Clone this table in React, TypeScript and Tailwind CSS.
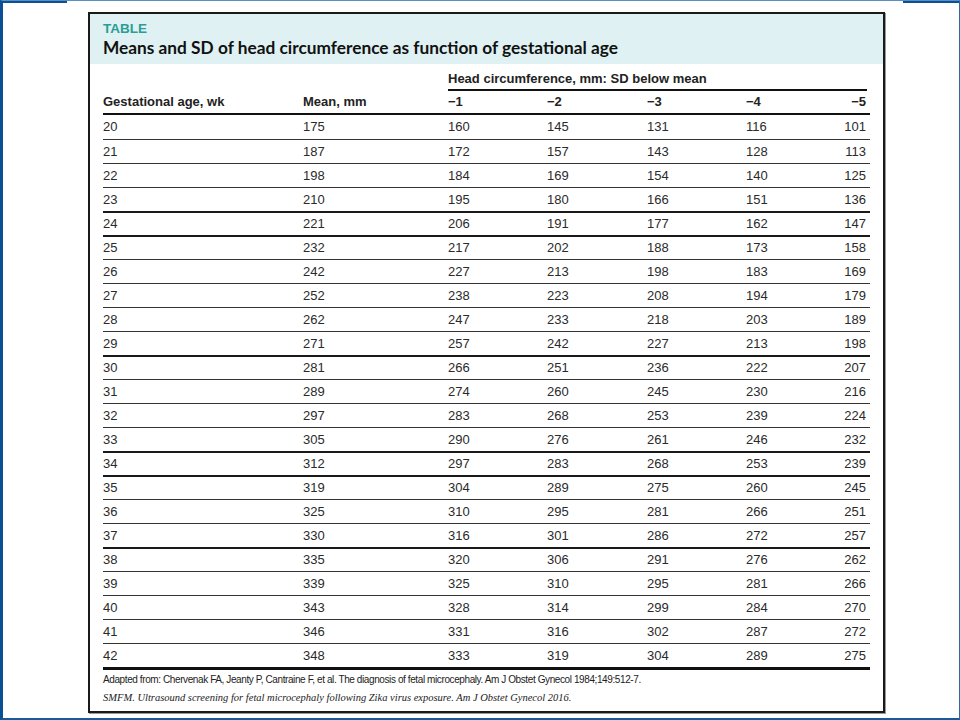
import React from "react";

const rows: number[][] = [
  [20, 175, 160, 145, 131, 116, 101],
  [21, 187, 172, 157, 143, 128, 113],
  [22, 198, 184, 169, 154, 140, 125],
  [23, 210, 195, 180, 166, 151, 136],
  [24, 221, 206, 191, 177, 162, 147],
  [25, 232, 217, 202, 188, 173, 158],
  [26, 242, 227, 213, 198, 183, 169],
  [27, 252, 238, 223, 208, 194, 179],
  [28, 262, 247, 233, 218, 203, 189],
  [29, 271, 257, 242, 227, 213, 198],
  [30, 281, 266, 251, 236, 222, 207],
  [31, 289, 274, 260, 245, 230, 216],
  [32, 297, 283, 268, 253, 239, 224],
  [33, 305, 290, 276, 261, 246, 232],
  [34, 312, 297, 283, 268, 253, 239],
  [35, 319, 304, 289, 275, 260, 245],
  [36, 325, 310, 295, 281, 266, 251],
  [37, 330, 316, 301, 286, 272, 257],
  [38, 335, 320, 306, 291, 276, 262],
  [39, 339, 325, 310, 295, 281, 266],
  [40, 343, 328, 314, 299, 284, 270],
  [41, 346, 331, 316, 302, 287, 272],
  [42, 348, 333, 319, 304, 289, 275],
];

const thick = new Set([24, 25, 30, 34, 35, 38]);

const grid = "grid grid-cols-[200px_145px_99px_100px_99px_64px_60px]";

export default function App() {
  return (
    <div className="relative w-[960px] h-[720px] bg-white border-l-[3px] border-l-[#0b4f95] border-t border-t-[#5a8fc4] border-r border-r-[#2a6aa8] border-b-2 border-b-[#1a5a9a] overflow-hidden">
      <div className="absolute left-0 top-0 w-[64px] h-[2px] bg-[#0b4f95]" />
      <div className="absolute right-0 top-0 w-[56px] h-[2px] bg-[#0b4f95]" />
      <div className="pl-[85px] pt-[11px]">
        <div
          className="w-[797px] h-[701px] border-2 border-[#1a1a1a] shadow-[1px_1px_0_#9a9a9a] flex flex-col"
          style={{ fontFamily: '"Liberation Sans", Arial, sans-serif' }}
        >
          <div className="h-[50px] bg-[#dff1f2] pl-[13px] pt-[7px]">
            <div className="text-[13.5px] leading-[16px] font-bold text-[#2b9d95]">TABLE</div>
            <div
              className="text-[17.3px] leading-[22px] font-bold text-[#111]"
              style={{ fontFamily: '"Lato", "Liberation Sans", sans-serif' }}
            >
              Means and SD of head circumference as function of gestational age
            </div>
          </div>
          <div className="px-[13px] text-[#2a2a2a]">
            <div className="h-[27px] flex items-end">
              <div className="ml-[345px] w-[419px] border-b-2 border-[#111] pb-[3px] text-[13px] leading-[15px] font-bold text-[#222]">
                Head circumference, mm: SD below mean
              </div>
            </div>
            <div className={`${grid} h-[24px] items-center border-b-2 border-[#111] text-[13px] font-bold text-[#222]`}>
              <div>Gestational age, wk</div>
              <div>Mean, mm</div>
              <div>−1</div>
              <div>−2</div>
              <div>−3</div>
              <div>−4</div>
              <div className="text-right pr-[4px]">−5</div>
            </div>
            {rows.map((r, i) => (
              <div
                key={r[0]}
                className={`${grid} h-[24px] items-center text-[13px] ${
                  i === 0 ? "" : thick.has(r[0]) ? "border-t-2 border-[#1a1a1a]" : "border-t border-[#333]"
                }`}
              >
                <div>{r[0]}</div>
                <div>{r[1]}</div>
                <div>{r[2]}</div>
                <div>{r[3]}</div>
                <div>{r[4]}</div>
                <div>{r[5]}</div>
                <div className="text-right pr-[4px]">{r[6]}</div>
              </div>
            ))}
            <div className="border-t-[3px] border-[#111] pt-[3px]">
              <div
                className="text-[10px] leading-[14px] text-[#222] tracking-[-0.4px]"
                style={{ fontFamily: '"Liberation Sans Narrow", "Liberation Sans", Arial, sans-serif' }}
              >
                Adapted from: Chervenak FA, Jeanty P, Cantraine F, et al. The diagnosis of fetal microcephaly. Am J Obstet Gynecol 1984;149:512-7.
              </div>
              <div
                className="mt-[4px] text-[10.5px] leading-[14px] italic text-[#222]"
                style={{ fontFamily: '"Liberation Serif", "Times New Roman", serif' }}
              >
                SMFM. Ultrasound screening for fetal microcephaly following Zika virus exposure. Am J Obstet Gynecol 2016.
              </div>
            </div>
          </div>
        </div>
      </div>
    </div>
  );
}
